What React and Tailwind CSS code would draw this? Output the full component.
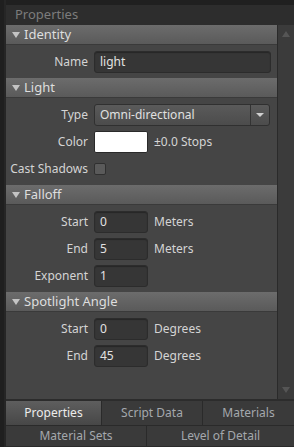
import React from 'react';

const font = { fontFamily: '"Noto Sans", "Open Sans", sans-serif' };

function Header({ title }) {
  return (
    <div className="h-[20px] flex items-center gap-[4px] pl-[6px] bg-gradient-to-b from-[#6c6c6c] to-[#5a5a5a] border-b border-[#3a3a3a] text-[13px] text-[#dedede]">
      <svg width="8" height="6" viewBox="0 0 8 6"><path d="M0 0h8L4 6z" fill="#c4c4c4" /></svg>
      <span className="leading-none">{title}</span>
    </div>
  );
}

function Row({ label, children }) {
  return (
    <div className="flex items-center h-[22px]">
      <div className="w-[88px] text-right pr-[6px] text-[12px] text-[#d4d4d4] whitespace-nowrap">{label}</div>
      <div className="flex items-center gap-[6px] flex-1 min-w-0">{children}</div>
    </div>
  );
}

function Field({ value, className = 'w-[54px]' }) {
  return (
    <div className={`${className} h-[22px] rounded-[3px] bg-[#363636] border border-[#2c2c2c] shadow-[inset_0_1px_1px_rgba(0,0,0,0.3)] flex items-center pl-[5px] text-[12px] text-[#e2e2e2]`}>
      {value}
    </div>
  );
}

function Unit({ children }) {
  return <span className="text-[12px] text-[#d4d4d4]">{children}</span>;
}

function Body({ children }) {
  return <div className="flex flex-col gap-[5px] pt-[6px] pb-[5px]">{children}</div>;
}

export default function App() {
  return (
    <div className="w-[294px] h-[447px] bg-[#2a2a2a] flex overflow-hidden" style={font}>
      <div className="w-[6px] bg-[#1f1f1f] border-r-2 border-[#262626]" />
      <div className="flex-1 flex flex-col min-w-0">
        <div className="h-[5px] bg-[#202020]" />
        <div className="h-[20px] bg-[#2d2d2d] flex items-center pl-[9px] text-[13px] text-[#7c7c7c]">Properties</div>
        <div className="flex h-[376px] border-b-2 border-[#2c2c2c]">
          <div className="flex-1 bg-[#454545] flex flex-col">
            <Header title="Identity" />
            <Body>
              <Row label="Name"><Field value="light" className="w-[177px]" /></Row>
            </Body>
            <Header title="Light" />
            <Body>
              <Row label="Type">
                <div className="w-[176px] h-[22px] rounded-[3px] bg-gradient-to-b from-[#5a5a5a] to-[#4c4c4c] border border-[#303030] flex items-center text-[12px] text-[#e0e0e0]">
                  <span className="flex-1 pl-[5px]">Omni-directional</span>
                  <span className="w-[19px] h-full border-l border-[#333] flex items-center justify-center">
                    <svg width="8" height="4" viewBox="0 0 8 4"><path d="M0 0h8L4 4z" fill="#d0d0d0" /></svg>
                  </span>
                </div>
              </Row>
              <Row label="Color">
                <div className="w-[54px] h-[22px] rounded-[2px] bg-white border border-[#2a2a2a]" />
                <Unit>±0.0 Stops</Unit>
              </Row>
              <Row label="Cast Shadows">
                <div className="w-[12px] h-[12px] rounded-[2px] bg-[#5a5a5a] border border-[#303030]" />
              </Row>
            </Body>
            <Header title="Falloff" />
            <Body>
              <Row label="Start"><Field value="0" /><Unit>Meters</Unit></Row>
              <Row label="End"><Field value="5" /><Unit>Meters</Unit></Row>
              <Row label="Exponent"><Field value="1" /></Row>
            </Body>
            <Header title="Spotlight Angle" />
            <Body>
              <Row label="Start"><Field value="0" /><Unit>Degrees</Unit></Row>
              <Row label="End"><Field value="45" /><Unit>Degrees</Unit></Row>
            </Body>
          </div>
          <div className="w-[17px] bg-[#3b3b3b] border-l border-[#2a2a2a] flex flex-col items-center justify-between py-[6px]">
            <svg width="8" height="6" viewBox="0 0 8 6"><path d="M0 6h8L4 0z" fill="#555" /></svg>
            <svg width="8" height="6" viewBox="0 0 8 6"><path d="M0 0h8L4 6z" fill="#555" /></svg>
          </div>
        </div>
        <div className="flex h-[24px] text-[12px]">
          <div className="w-[96px] bg-gradient-to-b from-[#5e5e5e] to-[#474747] border-r border-[#2a2a2a] flex items-center justify-center text-[#ececec]">Properties</div>
          <div className="w-[101px] bg-[#3a3a3a] border-r border-[#2a2a2a] flex items-center justify-center text-[#a4a8ad]">Script Data</div>
          <div className="flex-1 bg-[#3a3a3a] flex items-center justify-center text-[#a4a8ad]">Materials</div>
        </div>
        <div className="flex h-[21px] text-[12px] border-t border-[#2a2a2a]">
          <div className="w-[141px] bg-[#3a3a3a] border-r border-[#2a2a2a] flex items-center justify-center text-[#a4a8ad]">Material Sets</div>
          <div className="flex-1 bg-[#3a3a3a] flex items-center justify-center text-[#a4a8ad]">Level of Detail</div>
        </div>
      </div>
    </div>
  );
}
